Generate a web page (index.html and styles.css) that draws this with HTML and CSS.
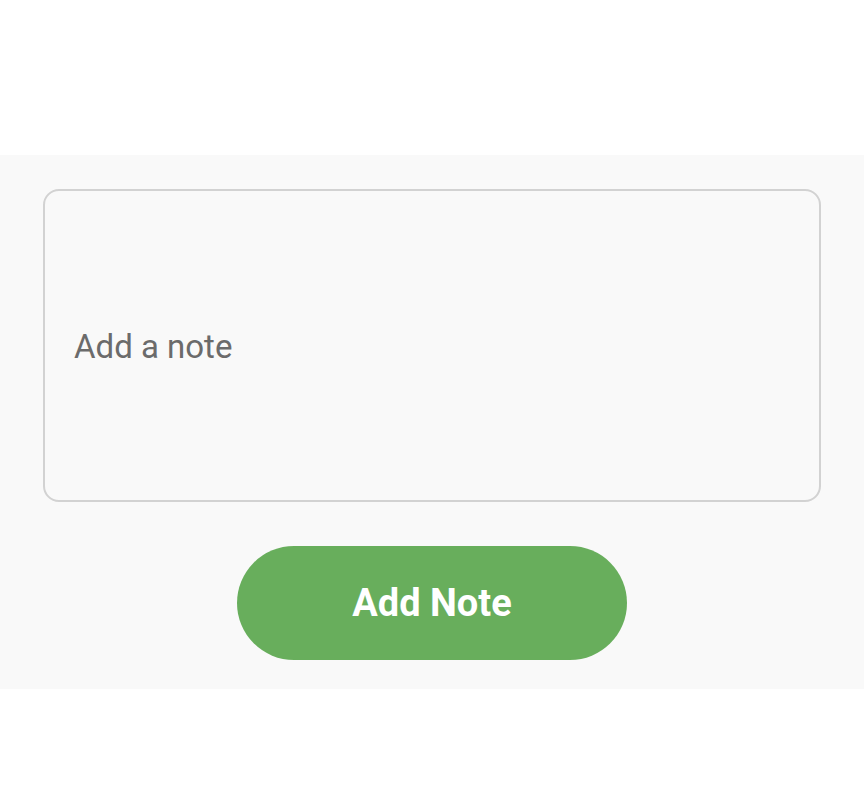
FILE: index.html
```html
<!DOCTYPE html>
<html>
<head>
<meta charset="utf-8">
<link rel="stylesheet" href="styles.css">
</head>
<body>
<div class="top"></div>
<section class="panel">
  <div class="note-box"><span class="placeholder">Add a note</span></div>
  <button class="add-btn">Add Note</button>
</section>
</body>
</html>
```
FILE: styles.css
```css
html, body {
  margin: 0;
  padding: 0;
  background: #ffffff;
  font-family: Roboto, "Noto Sans", sans-serif;
}
.top {
  height: 155px;
}
.panel {
  background: #f9f9f9;
  padding: 34px 43px 29px;
  display: flex;
  flex-direction: column;
  align-items: center;
  gap: 44px;
}
.note-box {
  box-sizing: border-box;
  width: 100%;
  height: 313px;
  border: 2px solid #d2d2d2;
  border-radius: 16px;
  display: flex;
  align-items: center;
  padding: 0 29px;
}
.placeholder {
  font-size: 33px;
  color: #6b6b6b;
  margin-top: 2px;
}
.add-btn {
  width: 390px;
  height: 114px;
  border: none;
  border-radius: 57px;
  background: #68ae5c;
  color: #ffffff;
  font-family: Roboto, "Noto Sans", sans-serif;
  font-weight: 700;
  font-size: 38px;
  padding: 0;
}
```
